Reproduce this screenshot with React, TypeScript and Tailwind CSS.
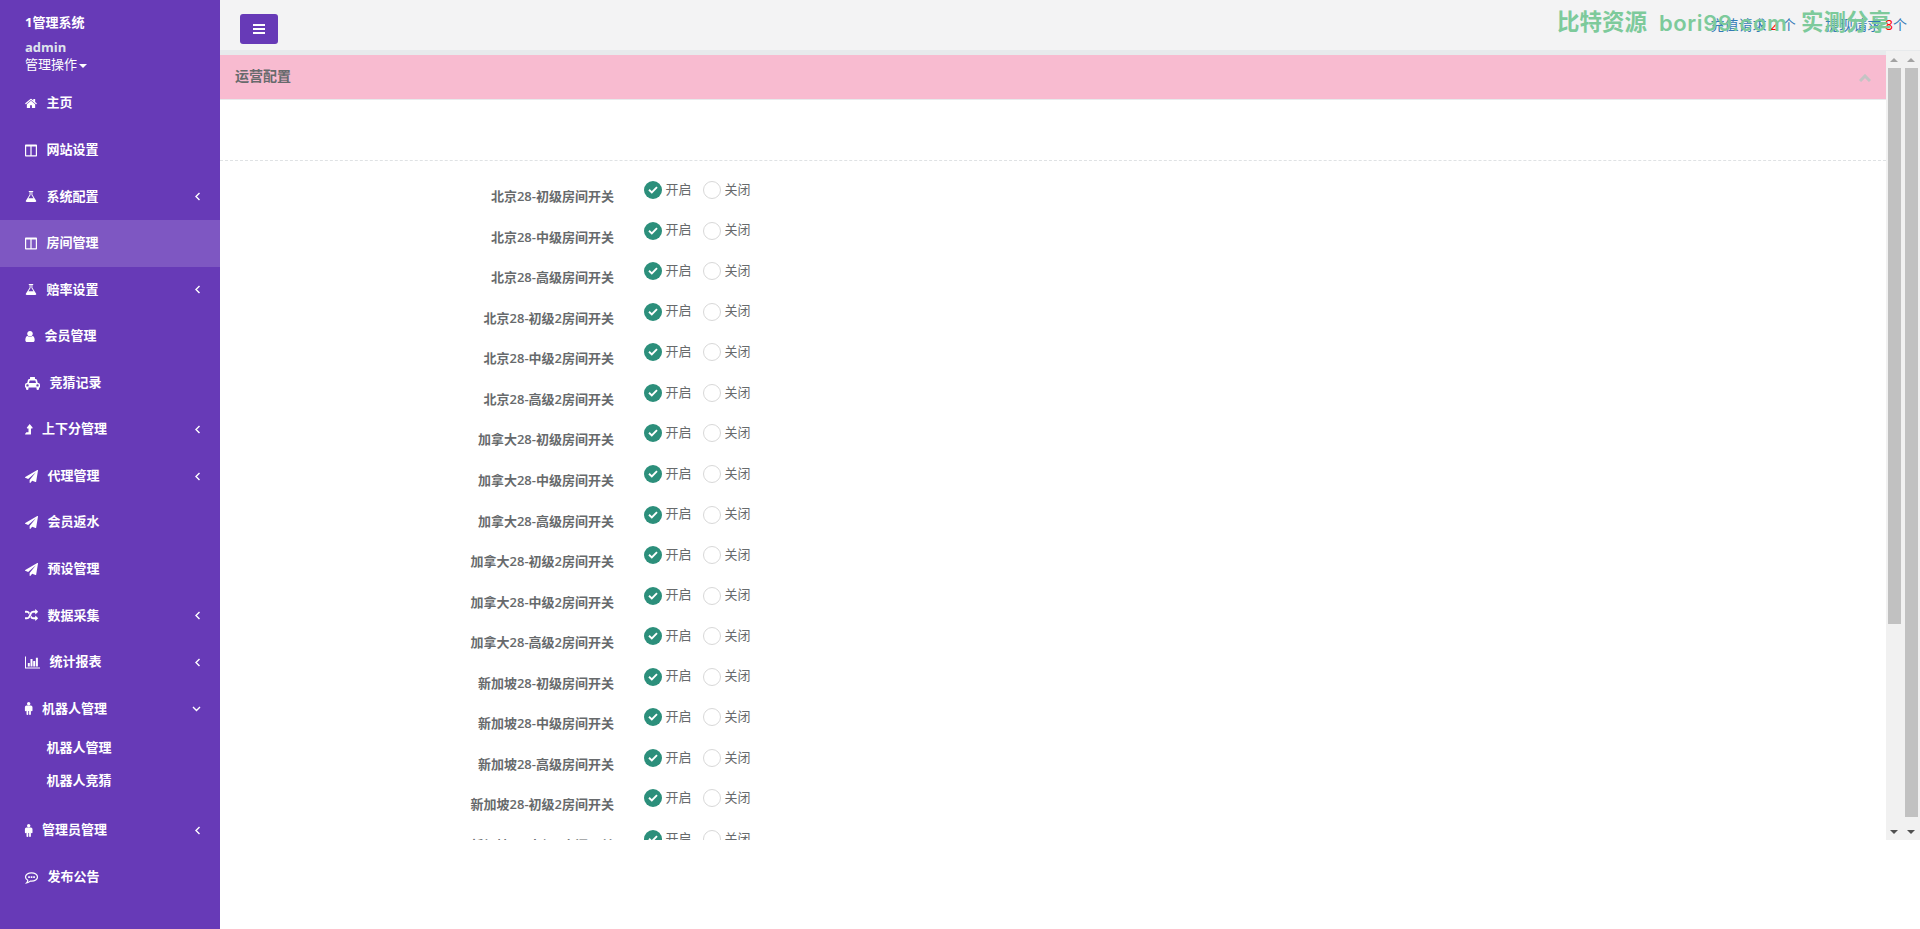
import React from 'react';

type IconDef = { w: number; box: string; body: React.ReactNode };

const icons: Record<string, IconDef> = {
    home: {
        w: 12,
        box: '64 0 1664 1792',
        body: (
            <path d="M1472 992v480q0 26-19 45t-45 19h-384v-384h-256v384h-384q-26 0-45-19t-19-45v-480q0-1 .5-3t.5-3l575-474 575 474q1 2 1 6zm223-69l-62 74q-8 9-21 11h-3q-13 0-21-7l-692-577-692 577q-12 8-24 7-13-2-21-11l-62-74q-8-10-7-23.5t11-21.5l719-599q32-26 76-26t76 26l244 204v-195q0-14 9-23t23-9h192q14 0 23 9t9 23v408l219 182q10 8 11 21.5t-7 23.5z" />
        ),
    },
    columns: {
        w: 12,
        box: '0 0 12 13',
        body: (
            <path
                fillRule="evenodd"
                d="M1 .5h10.200q.8 0 .8.8v10.400q0 .8-.8.800H.8q-.8 0-.8-.8V1.300Q0 .5.800.5zM1.200 2.500v8.800h4.200V2.500zM6.600 2.500v8.800h4.200V2.500z"
            />
        ),
    },
    flask: {
        w: 12,
        box: '64 0 1664 1792',
        body: (
            <path d="M1591 1448q56 89 21.5 152.5t-140.5 63.5h-1152q-106 0-140.5-63.5t21.5-152.5l503-793v-399h-64q-26 0-45-19t-19-45 19-45 45-19h512q26 0 45 19t19 45-19 45-45 19h-64v399zm-779-725l-272 429h712l-272-429-20-31v-436h-128v436z" />
        ),
    },
    user: {
        w: 10,
        box: '256 0 1280 1792',
        body: (
            <path d="M1536 1399q0 109-62.5 187t-150.5 78h-854q-88 0-150.5-78t-62.5-187q0-85 8.5-160.5t31.5-152 58.5-131 94-89 134.5-34.5q131 128 313 128t313-128q76 0 134.5 34.5t94 89 58.5 131 31.5 152 8.5 160.5zm-256-887q0 159-112.5 271.5t-271.5 112.5-271.5-112.5-112.5-271.5 112.5-271.5 271.5-112.5 271.5 112.5 112.5 271.5z" />
        ),
    },
    taxi: {
        w: 15,
        box: '0 0 15 13',
        body: (
            <path
                fillRule="evenodd"
                d="M5.500 0h4q.5 0 .5.500V2h.6q1.200 0 1.500 1.200L12.800 6h.4Q15 6 15 7.800V10.500h-1v1.200q0 1.300-1.250 1.300t-1.250-1.300v-1.200h-8v1.200q0 1.300-1.250 1.300T1 11.700v-1.200H0V7.800Q0 6 1.800 6h.4l.7-2.800Q3.200 2 4.400 2H5V.5q0-.5.500-.5zM4.700 3.500 4 6h7l-.7-2.500zM2.500 7.200a1.200 1.200 0 1 0 0 2.400 1.200 1.200 0 0 0 0-2.400zM12.500 7.200a1.200 1.200 0 1 0 0 2.400 1.200 1.200 0 0 0 0-2.400z"
            />
        ),
    },
    levelUp: {
        w: 7.4,
        box: '0 0 7.4 13',
        body: <path d="M4.700 1 7.600 4.500Q7.800 5.400 7.100 5.400H6V11q0 .6-.6.600H.6q-.3 0-.5-.3L0 11 1.400 9.300H3.500V5.400H2.300Q1.600 5.200 1.900 4.500z" />,
    },
    plane: {
        w: 13,
        box: '0 0 1792 1792',
        body: (
            <path d="M1764 11q33 24 27 64l-256 1536q-5 29-32 45-14 8-31 8-11 0-24-5l-453-185-242 295q-18 23-49 23-13 0-22-4-19-7-30.5-23.5t-11.500-36.500v-349l864-1059-1069 925-395-162q-37-14-40-55-2-40 32-59l1664-960q15-9 32-9 20 0 36 11z" />
        ),
    },
    random: {
        w: 13,
        box: '0 0 1792 1792',
        body: (
            <path d="M666 481q-60 92-137 273-22-45-37-72.5t-40.5-63.5-51-56.5-63-35-81.5-14.5h-224q-14 0-23-9t-9-23v-192q0-14 9-23t23-9h224q250 0 410 225zm1126 799q0 14-9 23l-320 320q-9 9-23 9-13 0-22.5-9.5t-9.5-22.5v-192q-32 0-85 .5t-81 1-73-1-71-5-64-10.5-63-18.5-58-28.5-59-40-55-53.5-56-69.5q59-93 136-273 22 45 37 72.5t40.5 63.5 51 56.5 63 35 81.5 14.5h256v-192q0-14 9-23t23-9q12 0 24 10l319 319q9 9 9 23zm0-896q0 14-9 23l-320 320q-9 9-23 9-13 0-22.5-9.5t-9.5-22.5v-192h-256q-48 0-87 15t-69 45-51 61.5-45 77.5q-32 62-78 171-29 66-49.5 111t-54 105-64 100-74 83-90 68.5-106.5 42-128 16.500h-224q-14 0-23-9t-9-23v-192q0-14 9-23t23-9h224q48 0 87-15t69-45 51-61.500 45-77.500q32-62 78-171 29-66 49.500-111t54-105 64-100 74-83 90-68.500 106.500-42 128-16.500h256v-192q0-14 9-23t23-9q12 0 24 10l319 319q9 9 9 23z" />
        ),
    },
    chart: {
        w: 15,
        box: '0 0 15 13',
        body: <path d="M0 .5h1v11h14v1H0zM2.800 7h2v3.500h-2zM5.500 3h2v7.500h-2zM8.200 5h2v5.500h-2zM10.900 1.800h2v8.700h-2z" />,
    },
    male: {
        w: 7.4,
        box: '0 0 7.4 13',
        body: (
            <>
                <circle cx="3.7" cy="1.700" r="1.700" />
                <path d="M1.500 3.600h4.400q1.600 0 1.600 1.600v3.200q0 .8-.8.800t-.8-.8V12.200q0 .8-.9.800t-.9-.8V9h-.8v3.200q0 .8-.9.800t-.9-.8V8.400q0 .8-.8.800T-.1 8.400V5.200q0-1.600 1.600-1.600z" />
            </>
        ),
    },
    comment: {
        w: 13,
        box: '0 0 13 13',
        body: (
            <>
                <path
                    d="M6.500 1.800c3.300 0 6 1.900 6 4.200s-2.700 4.200-6 4.200q-.6 0-1.200-.1-1.700 1.500-3.700 1.800 1-1 1.200-2.600C1.300 8.500.5 7.400.5 6c0-2.300 2.700-4.200 6-4.200z"
                    fill="none"
                    stroke="currentColor"
                    strokeWidth="1.200"
                />
                <path d="M3.200 5.200h1.700v1.700H3.200zM5.700 5.200h1.700v1.700H5.700zM8.200 5.200h1.700v1.700H8.200z" />
            </>
        ),
    },
};

const menu = [
    { icon: 'home', title: '主页' },
    { icon: 'columns', title: '网站设置' },
    { icon: 'flask', title: '系统配置', arrow: 'left' },
    { icon: 'columns', title: '房间管理', active: true },
    { icon: 'flask', title: '赔率设置', arrow: 'left' },
    { icon: 'user', title: '会员管理' },
    { icon: 'taxi', title: '竞猜记录' },
    { icon: 'levelUp', title: '上下分管理', arrow: 'left' },
    { icon: 'plane', title: '代理管理', arrow: 'left' },
    { icon: 'plane', title: '会员返水' },
    { icon: 'plane', title: '预设管理' },
    { icon: 'random', title: '数据采集', arrow: 'left' },
    { icon: 'chart', title: '统计报表', arrow: 'left' },
    { icon: 'male', title: '机器人管理', arrow: 'down', children: ['机器人管理', '机器人竞猜'] },
    { icon: 'male', title: '管理员管理', arrow: 'left' },
    { icon: 'comment', title: '发布公告' },
];

const rooms = ['北京28', '加拿大28', '新加坡28'].flatMap((game) =>
    ['初级', '中级', '高级', '初级2', '中级2', '高级2'].map((level) => `${game}-${level}房间开关`)
);

const Icon = ({ name }: { name: string }) => {
    const { w, box, body } = icons[name];
    return (
        <svg width={w} height={13} viewBox={box} fill="currentColor" className="shrink-0 overflow-visible">
            {body}
        </svg>
    );
};

const Arrow = ({ dir }: { dir: string }) => (
    <svg width="9" height="9" viewBox="0 0 9 9" fill="none" stroke="currentColor" strokeWidth="1.4">
        <path d={dir === 'left' ? 'M7.500 1 4 4.500 7.500 8' : 'M1 3 4.500 6.500 8 3'} />
    </svg>
);

const Sidebar = () => (
    <nav className="h-full w-[220px] shrink-0 bg-[#673ab7] text-[13px] leading-[18.57px] font-bold text-white">
        <div className="flex h-[80.4px] flex-col pt-[13px] pl-[25px]">
            <span>1管理系统</span>
            <span className="mt-[6px] text-[#dfe4ed]">admin</span>
            <span className="-mt-px flex items-center font-normal">
                管理操作
                <i className="mt-[4px] ml-[2px] border-x-4 border-t-4 border-x-transparent border-t-white" />
            </span>
        </div>
        {menu.map(({ icon, title, arrow, active, children }) => (
            <div key={title}>
                <div className={`flex h-[46.57px] items-center pr-[19px] pl-[25px] ${active ? 'bg-[#7e57c2]' : ''}`}>
                    <Icon name={icon} />
                    <span className="ml-[9.6px] grow pb-[2px]">{title}</span>
                    {arrow && <Arrow dir={arrow} />}
                </div>
                {children && (
                    <div className="pb-[10px]">
                        {children.map((child) => (
                            <div key={child} className="pt-[6px] pb-[8px] pl-[46.6px]">
                                {child}
                            </div>
                        ))}
                    </div>
                )}
            </div>
        ))}
    </nav>
);

const Header = () => (
    <header className="relative flex h-[51px] shrink-0 justify-between border-b border-[#e7eaec] bg-[#f3f3f4] pr-[13px] pl-5">
        <button className="mt-[14px] flex h-[30px] w-[38px] items-center justify-center rounded-[3px] bg-[#673ab7]">
            <svg width="12" height="10" viewBox="0 0 12 10" fill="white">
                <path d="M0 0h12v2H0zM0 4h12v2H0zM0 8h12v2H0z" />
            </svg>
        </button>
        <div className="mt-[15px] flex gap-[29.5px] text-sm text-[#337ab7]">
            <span>
                充值请求 <b className="font-normal text-[#f00]">2</b> 个
            </span>
            <span>
                提现请求 <b className="font-normal text-[#f00]">8</b>个
            </span>
        </div>
        {/* site stamp over the request counters */}
        <div className="absolute top-[9px] right-[29px] flex h-[27px] items-center gap-[12px] text-[22.5px] leading-none font-bold whitespace-nowrap text-[#7dca9b]">
            <span>比特资源</span>
            <span className="w-[130px] font-[Inter] text-[22px] font-semibold tracking-[0.6px]">bori99.com</span>
            <span>实测分享</span>
        </div>
    </header>
);

const RoomRow = ({ label }: { label: string }) => (
    <div className="flex h-[40.57px] shrink-0">
        <div className="w-[394px] pt-[6px] text-right font-semibold">{label}</div>
        <div className="ml-[30px] flex h-[18px] items-center">
            <span className="flex size-[18px] items-center justify-center rounded-full bg-[#2c8f7b]">
                <svg width="10" height="8" viewBox="0 0 10 8" fill="none" stroke="white" strokeWidth="1.9">
                    <path d="M1 3.800 3.800 6.400 9 1.200" />
                </svg>
            </span>
            <span className="ml-[3.500px] pb-[2px]">开启</span>
            <span className="ml-[11.500px] size-[18px] rounded-full border border-[#d8d8d8] bg-white" />
            <span className="ml-[3.500px] pb-[2px]">关闭</span>
        </div>
    </div>
);

const Scrollbar = ({ thumb }: { thumb: string }) => (
    <div className="flex w-[17px] flex-col items-center bg-[#f1f1f1]">
        <div className="flex h-[17px] items-center">
            <i className="-ml-px border-x-4 border-b-4 border-x-transparent border-b-[#a3a3a3]" />
        </div>
        <div className={`w-[13px] bg-[#c1c1c1] ${thumb}`} />
        <div className="mt-auto flex h-[17px] items-center">
            <i className="-ml-px border-x-4 border-t-4 border-x-transparent border-t-[#505050]" />
        </div>
    </div>
);

export default function App() {
    return (
        <div className="flex h-[929px] w-[1920px] overflow-hidden bg-white font-['Open_Sans','Noto_Sans_CJK_SC',sans-serif] text-[13px] leading-[18.57px] text-[#676a6c]">
            <Sidebar />
            <div className="flex min-w-0 grow flex-col">
                <Header />
                <div className="flex h-[789px]">
                    <main className="flex min-w-0 grow flex-col overflow-hidden">
                        <div className="flex h-[49px] shrink-0 items-center justify-between border-t-4 border-b border-[#e7eaec] bg-[#f8bbd0] pr-[15px] pl-[15px]">
                            <h5 className="pb-[2px] text-sm font-semibold">运营配置</h5>
                            <svg width="12" height="8" viewBox="0 0 12 8" fill="none" stroke="#c4c4c4" strokeWidth="3" className="mt-[2px]">
                                <path d="M1 7 6 2l5 5" />
                            </svg>
                        </div>
                        <div className="mt-[60px] mb-[20px] border-t border-dashed border-[#dfe2e4]" />
                        {rooms.map((room) => (
                            <RoomRow key={room} label={room} />
                        ))}
                    </main>
                    <Scrollbar thumb="h-[556px]" />
                    <Scrollbar thumb="h-[749px]" />
                </div>
            </div>
        </div>
    );
}
